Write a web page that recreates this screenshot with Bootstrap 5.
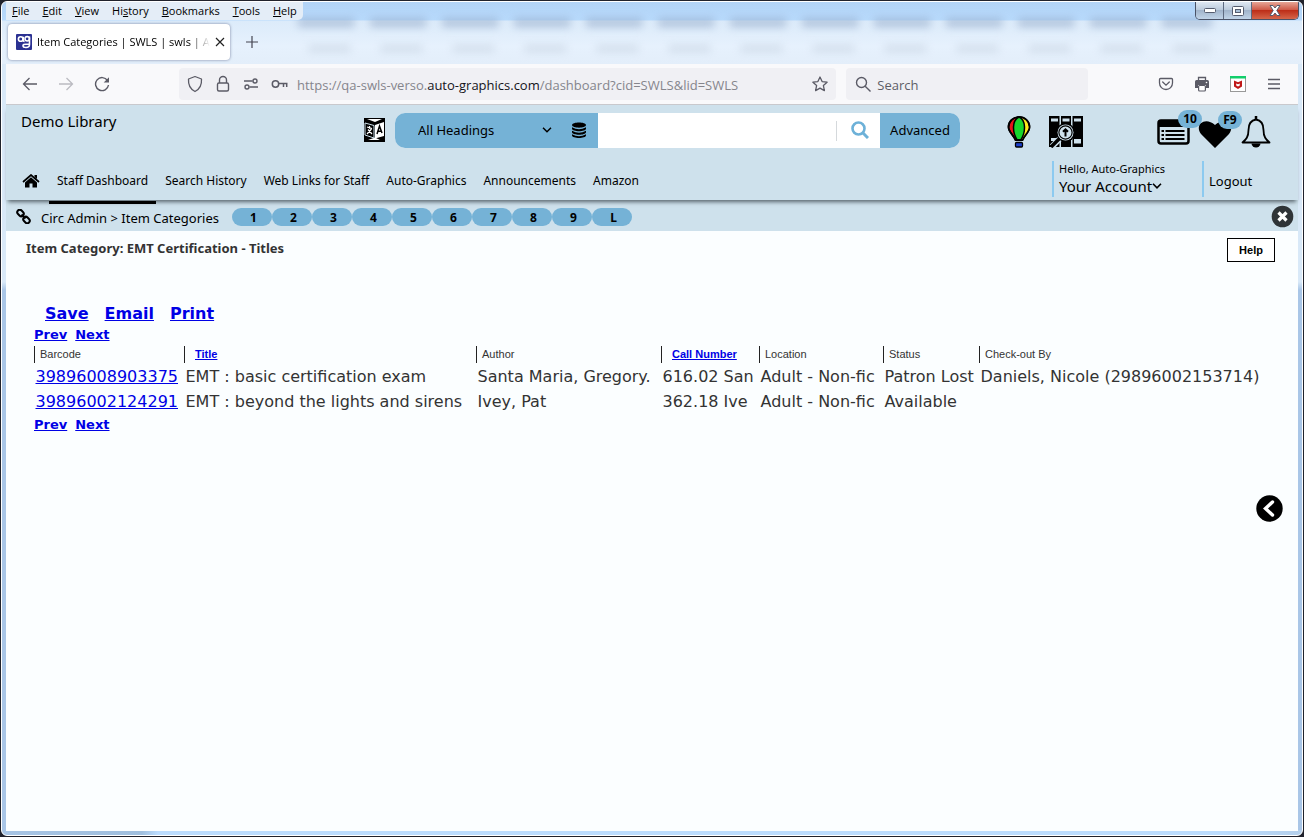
<!DOCTYPE html>
<html lang="en">
<head>
<meta charset="utf-8">
<meta name="viewport" content="width=device-width, initial-scale=1">
<title>Item Categories | SWLS | swls | Auto-Graphics</title>
<link rel="stylesheet" href="https://cdn.jsdelivr.net/npm/bootstrap@5.3.0/dist/css/bootstrap.min.css">
<style>
  :root { --pale:#cee1ec; --mid:#75b2d6; --line:#8ccaf0; --page:#fbfeff; --chrome:#f9f9fb; --field:#f0f0f4; --ink:#5b5b66; }
  body { font-family:"Noto Sans","Open Sans",sans-serif; font-size:13px; line-height:18px; color:#000; background:#20222c; }
  a { color:inherit; text-decoration:none; }
  svg { display:block; flex:none; }
  button { padding:0; border:0; background:none; color:inherit; }
  .desk-window { min-height:100vh; padding:1px; }
  .glass { border:1px solid #fff; border-radius:6px; padding:0 4px 4px; overflow:hidden;
    background:linear-gradient(90deg,#a7c4e4 0,#a0bfde 140px,#bbdcfe 156px,#bbdcfe 94%,#b4cfeb) bottom/100% 5px no-repeat,linear-gradient(#d9e9f8 0,#d9e9f8 280px,#a9c6e7 288px); }
  .titlebar { height:62px; margin:0 -4px; padding:0 4px; background:linear-gradient(#b2d3f6 0,#b8dafc 18px,#dcebfa 19px,#e6f1fd 44px,#e3eefa); font-family:"Open Sans",sans-serif; font-size:11px; }
  .smudge { left:296px; right:90px; filter:blur(4px); }
  .smudge-a { top:16px; height:9px; background:repeating-linear-gradient(90deg,#97adcb 0,#97adcb 56px,transparent 57px,transparent 72px); opacity:.65; }
  .smudge-b { top:43px; height:7px; background:repeating-linear-gradient(90deg,transparent 0,transparent 10px,#b9c6d5 11px,#b9c6d5 52px,transparent 53px,transparent 72px); opacity:.45; }
  .menus { background:#e4edf7; border-radius:0 0 5px 0; padding:0 6px; gap:13px; height:18px; align-items:center; }
  .menus button { line-height:16px; }
  .tab-box { width:222px; height:36px; margin-left:2px; border-radius:4px; background:#fff; box-shadow:0 0 3px #7780a0; padding:0 10px 0 8px; gap:5px; }
  .tab-box .tab-label { flex:1; white-space:nowrap; -webkit-mask-image:linear-gradient(90deg,#000 88%,transparent); }
  .win-buttons { top:0; right:3px; height:18px; border:1px solid #4a5266; border-top:0; border-radius:0 0 5px 5px; overflow:hidden; }
  .win-buttons button { display:grid; place-items:center; width:28px; background:linear-gradient(#dfe8f2,#bccbdc 45%,#9fb2c9 46%,#c1d4e8); border-right:1px solid #5e6a80; }
  .win-buttons .w-close { width:46px; border:0; background:linear-gradient(#e6a596,#cf5b49 45%,#bb2a15 46%,#d5664a); }
  .toolbar { height:41px; background:var(--chrome); border-bottom:1px solid #c9c9cd; color:var(--ink); font-family:"Open Sans",sans-serif; }
  .toolbar .nav-group { width:173px; padding-left:16px; gap:20px; }
  .url-box,.find-box { height:32px; background:var(--field); border-radius:4px; }
  .url-box { flex:642 1 0; padding:0 8px; gap:12px; }
  .find-box { flex:224 1 0; padding:0 9px; margin-left:10px; gap:5px; }
  .url-text { flex:1; font-size:13px; line-height:20px; padding-top:1px; margin-left:-3px; color:#85858c; white-space:nowrap; overflow:hidden; }
  .url-text b { font-weight:400; color:#15141a; }
  .find-box input { border:0; background:none; min-width:0; width:100%; padding:1px 0 0; }
  .find-box input::placeholder { color:#5d5d66; opacity:1; }
  .toolbar .tools { padding:0 16px 0 70px; gap:20px; }
  .app-head { background:var(--pale); height:95px; box-shadow:0 4px 4px -2px #59666e; z-index:2; padding:0 26px 0 15px; }
  .brand-name { width:343px; font-size:15px; line-height:18px; align-self:flex-start; }
  .search-set { flex:1; height:35px; margin-left:10px; border-radius:10px; overflow:hidden; background:#fff; }
  .search-set .scope { width:203px; background:var(--mid); padding:0 11px 0 23px; }
  .scope select { appearance:none; border:0; background:none; width:120px; padding:0; color:#000; }
  .search-set input { flex:1; min-width:0; border:0; outline:0; padding:0 8px; }
  .search-set .go { width:44px; display:grid; place-items:center; position:relative; }
  .search-set .go::before { content:""; position:absolute; left:0; top:8px; height:20px; border-left:1px solid #d5d9dc; }
  .search-set .adv { width:80px; background:var(--mid); }
  .head-top { padding-top:7px; }
  .tool-icons { margin-left:47px; }
  .shelf { margin-left:18px; margin-right:74px; }
  .count-tag { position:absolute; height:18px; top:-9px; border-radius:9px; background:var(--mid); font-size:12px; font-weight:700; line-height:18px; text-align:center; width:24px; right:-12px; }
  .heart .count-tag { top:-5px; right:-10px; }
  .head-low { padding-top:13px; }
  .main-links { padding-left:1px; gap:1px; font-size:12px; }
  .main-links a { padding:0 8px; line-height:18px; position:relative; }
  .main-links a.current::after { content:""; position:absolute; left:0; right:0; top:29px; height:3px; background:#000; }
  .acct { border-left:2px solid var(--line); height:36px; width:150px; padding-left:5px; }
  .acct small { display:block; font-size:11px; line-height:16px; }
  .acct button { font-size:15px; line-height:18px; display:flex; align-items:center; }
  .out { border-left:2px solid var(--line); height:36px; width:70px; padding-left:5px; line-height:40px; }
  .crumb-bar { background:var(--pale); height:31px; padding:2px 4px 0 10px; }
  .crumbs { margin:2px 13px 0 10px; }
  .pills a { width:40px; height:18px; border-radius:9px; background:var(--mid); font-weight:700; font-size:12px; line-height:20px; text-align:center; padding-left:3px; }
  .sheet { background:var(--page); min-height:calc(100vh - 237px); font-family:"DejaVu Sans",sans-serif; color:#333; padding:7px 16px 0 20px; position:relative; }
  .sheet a { color:#0000e5; text-decoration:underline; }
  .sheet h1 { font-family:"Noto Sans",sans-serif; font-size:13px; line-height:20px; font-weight:700; margin:0; }
  .help-btn { width:48px; height:24px; border:1px solid #000; background:#fff; color:#000; font:bold 11px "Liberation Sans",sans-serif; margin-right:7px; }
  .acts { font-size:16px; font-weight:700; line-height:24px; gap:16px; margin:40px 0 0 19px; }
  .pager { font-size:13px; font-weight:700; line-height:18px; gap:8px; margin-left:8px; }
  .items { margin:2px 0 2px 8px; width:calc(100% - 8px); table-layout:fixed; color:#333; }
  .items th { border-left:1px solid #222; height:17px; padding:0 0 0 5px; font:11px/17px "Liberation Sans",sans-serif; white-space:nowrap; }
  .items th.sorted { font-weight:700; padding-left:10px; }
  .items td { font-size:16px; line-height:25px; padding:0 0 0 1px; white-space:nowrap; }
  .items tr:first-child td { padding-top:1px; }
  .slide-btn { position:absolute; right:15px; top:264px; }
</style>
</head>
<body>
<div class="desk-window">
<div class="glass">
  <header class="titlebar position-relative">
    <div class="smudge smudge-a position-absolute" aria-hidden="true"></div>
    <div class="smudge smudge-b position-absolute" aria-hidden="true"></div>
    <div class="d-flex position-relative">
      <nav class="menus d-flex" aria-label="Menu">
        <button type="button"><u>F</u>ile</button><button type="button"><u>E</u>dit</button><button type="button"><u>V</u>iew</button><button type="button">Hi<u>s</u>tory</button><button type="button"><u>B</u>ookmarks</button><button type="button"><u>T</u>ools</button><button type="button"><u>H</u>elp</button>
      </nav>
    </div>
    <div class="d-flex align-items-center position-relative pt-1">
      <div class="tab-box d-flex align-items-center">
        <svg width="16" height="16" viewBox="0 0 16 16"><rect width="16" height="16" rx="1" fill="#2b3192"/><g fill="none" stroke="#fff" stroke-width="1.6"><circle cx="4.7" cy="5" r="2.3"/><path d="M7.2 2.8v3.6q0 1 1.4 1"/><circle cx="11.2" cy="4.8" r="2.2"/><path d="M13.5 2.5v8q0 3-3.5 3-3 0-3-1.7t3-1.6h3"/></g></svg>
        <span class="tab-label">Item Categories | SWLS | swls | A</span>
        <button type="button" aria-label="Close tab"><svg width="10" height="10" viewBox="0 0 10 10" stroke="#222" stroke-width="1.2"><path d="M1 1l8 8M9 1l-8 8"/></svg></button>
      </div>
      <button type="button" class="ms-3" aria-label="New tab"><svg width="12" height="12" viewBox="0 0 12 12" stroke="#444450" stroke-width="1.2"><path d="M6 0v12M0 6h12"/></svg></button>
    </div>
    <div class="win-buttons position-absolute d-flex">
      <button type="button" aria-label="Minimize"><svg width="12" height="5"><rect x=".5" y=".5" width="11" height="4" rx="1" fill="#fff" stroke="#555c6e"/></svg></button>
      <button type="button" aria-label="Restore"><svg width="12" height="10"><rect x=".5" y=".5" width="11" height="9" rx="1" fill="#fff" stroke="#555c6e"/><rect x="3.5" y="3.500" width="5" height="3" fill="#a9bfd6" stroke="#555c6e"/></svg></button>
      <button type="button" class="w-close" aria-label="Close"><svg width="12" height="11" viewBox="0 0 12 11"><path d="M1 .5h3l2 2.500 2-2.500h3L7.800 5.500 11 10.500H8L6 8l-2 2.500H1l3.200-5z" fill="#fff" stroke="#555c6e"/></svg></button>
    </div>
  </header>

  <div class="toolbar d-flex align-items-center">
    <div class="nav-group d-flex">
      <button type="button" aria-label="Back"><svg width="16" height="16" viewBox="0 0 16 16" fill="none" stroke="#5b5b66" stroke-width="1.3"><path d="M15 8H2M7.500 2L1.500 8l6 6"/></svg></button>
      <button type="button" aria-label="Forward"><svg width="16" height="16" viewBox="0 0 16 16" fill="none" stroke="#bbbbc1" stroke-width="1.3"><path d="M1 8h13M8.500 2l6 6-6 6"/></svg></button>
      <button type="button" aria-label="Reload"><svg width="16" height="16" viewBox="0 0 16 16" fill="none" stroke="#5b5b66" stroke-width="1.4"><path d="M13.500 4.500A6.500 6.500 0 1 0 14.500 9"/><path d="M15 1.200V6.500H9.700z" fill="#5b5b66" stroke="none"/></svg></button>
    </div>
    <div class="url-box d-flex align-items-center">
      <svg width="16" height="18" viewBox="0 0 16 18" fill="none" stroke="#5b5b66" stroke-width="1.3"><path d="M8 1.500L14.500 4c.4 6-1.500 10-6.500 12.500C3 14 1.100 10 1.500 4z" stroke-linejoin="round"/></svg>
      <svg width="16" height="18" viewBox="0 0 16 18" fill="none" stroke="#5b5b66" stroke-width="1.400"><rect x="2.500" y="8" width="11" height="8" rx="1.500"/><path d="M4.500 8V5a3.500 3.500 0 0 1 7 0v3"/></svg>
      <svg width="16" height="16" viewBox="0 0 16 16" fill="none" stroke="#5b5b66" stroke-width="1.400"><path d="M1 5h8.500M6.500 11H15"/><circle cx="12" cy="5" r="2"/><circle cx="4" cy="11" r="2"/></svg>
      <svg width="17" height="12" viewBox="0 0 17 12" fill="none" stroke="#5b5b66" stroke-width="1.500"><circle cx="4.500" cy="6" r="3.200"/><path d="M8 5.500h8.500M12.500 6v3M15.700 6v3"/></svg>
      <span class="url-text">https://qa-swls-verso.<b>auto-graphics.com</b>/dashboard?cid=SWLS&amp;lid=SWLS</span>
      <button type="button" aria-label="Bookmark"><svg width="16" height="16" viewBox="0 0 16 16" fill="none" stroke="#5b5b66" stroke-width="1.300" stroke-linejoin="round"><path d="M8 1l2.100 4.600 5 .6-3.700 3.400 1 5L8 12.100l-4.400 2.500 1-5L.9 6.200l5-.6z"/></svg></button>
    </div>
    <div class="find-box d-flex align-items-center">
      <svg width="17" height="17" viewBox="0 0 17 17" fill="none" stroke="#5b5b66" stroke-width="1.400"><circle cx="6.500" cy="6.500" r="5"/><path d="M10.200 10.200L15.500 15.500"/></svg>
      <input type="search" placeholder="Search" aria-label="Search the web">
    </div>
    <div class="tools d-flex align-items-center">
      <button type="button" aria-label="Pocket"><svg width="16" height="16" viewBox="0 0 16 16" fill="none" stroke="#5b5b66" stroke-width="1.300"><path d="M2.500 2.500h11q1 0 1 1V7a6.500 6.500 0 0 1-13 0V3.500q0-1 1-1z"/><path d="M4.700 6L8 9.200 11.300 6" stroke-linecap="round"/></svg></button>
      <button type="button" aria-label="Print page"><svg width="16" height="16" viewBox="0 0 16 16"><path d="M4.500 4V1.500h7V4" fill="none" stroke="#5b5b66" stroke-width="1.300"/><path d="M2.500 4h11A1.700 1.700 0 0 1 15 5.700V12h-3V9H4v3H1V5.700A1.700 1.700 0 0 1 2.500 4z" fill="#5b5b66"/><rect x="4.600" y="9.500" width="6.800" height="5.500" rx="1" fill="#fff" stroke="#5b5b66" stroke-width="1.200"/><circle cx="12.500" cy="6.500" r=".8" fill="#fff"/></svg></button>
      <button type="button" aria-label="Web protection"><svg width="16" height="16" viewBox="0 0 16 16"><rect x=".5" y=".5" width="15" height="15" fill="#fff" stroke="#999"/><rect width="16" height="2.500" fill="#12ce6b"/><path d="M4 4.500L8 6.200 12 4.500V10.500L8 13l-4-2.500zM6.200 7.400v2L8 10.500l1.800-1.100v-2L8 8.200z" fill="#c01818" fill-rule="evenodd"/></svg></button>
      <button type="button" aria-label="Application menu"><svg width="16" height="16" viewBox="0 0 16 16" stroke="#5b5b66" stroke-width="1.300"><path d="M2 3.500h12M2 8h12M2 12.500h12"/></svg></button>
    </div>
  </div>

  <div class="app-head position-relative">
    <div class="head-top d-flex align-items-center">
      <div class="brand-name">Demo Library</div>
      <button type="button" aria-label="Language"><svg width="21" height="24" viewBox="0 0 21 24"><rect width="21" height="24"/><path d="M3 1h15l-7 3z" fill="#fff"/><path d="M4 22h12l-5-2.500z" fill="#fff"/><path d="M1 5l9 2.500V20L1 17z" fill="#000" stroke="#cee1ec"/><path d="M11 7l9-3v14l-9 2.500z" fill="#fff"/><path d="M3 9l5 1.500M5.500 8v3M7.500 11L3 16M4 11.500L8 16" stroke="#fff" stroke-width="1.200" fill="none"/><path d="M13 16l2.500-8L18 15M14 13.200h3.200" stroke="#000" stroke-width="1.500" fill="none"/></svg></button>
      <form class="search-set d-flex">
        <div class="scope d-flex align-items-center">
          <select aria-label="Search scope"><option>All Headings</option></select>
          <svg class="ms-1" width="10" height="6" viewBox="0 0 10 6" fill="none" stroke="#000" stroke-width="1.500"><path d="M1 .8l4 4 4-4"/></svg>
          <svg class="ms-auto" width="16" height="16" viewBox="0 0 16 16"><path d="M1 3C1-.5 15-.5 15 3S1 6.500 1 3z"/><path d="M1 5.200q7 4 14 0v1.500C15 10 1 10 1 6.700zM1 8.800q7 4 14 0v1.500c0 3.300-14 3.300-14 0zM1 12.200q7 4 14 0v1.300c0 3.300-14 3.300-14 0z"/></svg>
        </div>
        <input type="text" aria-label="Search terms">
        <button type="button" class="go" aria-label="Search"><svg class="ms-1" width="18" height="18" viewBox="0 0 18 18" fill="none" stroke="#6db1d8" stroke-width="2.600"><circle cx="7.500" cy="7.500" r="6"/><path d="M12 12l5 5" stroke-width="3"/></svg></button>
        <button type="button" class="adv">Advanced</button>
      </form>
      <div class="tool-icons d-flex align-items-center pt-1">
        <a href="#" aria-label="Kids"><svg width="24" height="32" viewBox="0 0 24 32"><path d="M1.500 11a10.500 10 0 0 1 21 0c0 5-5 8-7 13h-7c-2-5-7-8-7-13z" fill="#e8141c" stroke="#000" stroke-width="1.800"/><path d="M12 1a10.500 10 0 0 1 10 10c0 5-5 8-6.500 13H12z" fill="#ffec1c"/><path d="M12 1c7 3 7 15 1.800 23h-3.600C5 16 5 4 12 1z" fill="#18d62c" stroke="#000" stroke-width="1.500"/><path d="M1.500 11a10.500 10 0 0 1 21 0c0 5-5 8-7 13h-7c-2-5-7-8-7-13z" fill="none" stroke="#000" stroke-width="1.600"/><rect x="8.500" y="26.500" width="7" height="4.500" rx="1" fill="#1b3fd0" stroke="#000" stroke-width="1.300"/></svg></a>
        <a href="#" class="shelf" aria-label="Shelf browse"><svg width="34" height="32" viewBox="0 0 34 32"><path d="M0 0h10.500v31H0zM12 0h10v31H12zM23.500 0H34v31H23.500z"/><path d="M2 2.500h7v3H2zM13.500 2.500h7v3h-7zM25 2.500h7v3h-7zM25 23h7v4.500h-7zM2 22h6v3H2z" fill="#cee1ec"/><path d="M11 22.500L3 30.500" stroke="#cee1ec" stroke-width="6"/><circle cx="16.500" cy="16.500" r="9.500" fill="#000"/><circle cx="16.500" cy="16.500" r="8" fill="#cee1ec"/><circle cx="16.500" cy="16.500" r="6.600" stroke="#000" stroke-width="1.200" fill="#cee1ec"/><path d="M10.500 22.500L2 31" stroke="#000" stroke-width="3.500"/><path d="M16.500 20.500v-7M14 15.800l2.500-2.500 2.500 2.500" stroke="#000" stroke-width="2" fill="none"/></svg></a>
        <a href="#" class="position-relative" aria-label="Lists, 10"><svg width="33" height="26" viewBox="0 0 33 26"><rect x="1.500" y="1.500" width="30" height="23" rx="2.500" fill="none" stroke="#000" stroke-width="2.500"/><path d="M1 2h31v6H1z"/><path d="M8.500 12h19M8.500 16h19M8.500 20h19" stroke="#000" stroke-width="2"/><path d="M4.500 12h2.500M4.500 16h2.500M4.500 20h2.500" stroke="#000" stroke-width="2"/></svg><span class="count-tag">10</span></a>
        <a href="#" class="heart position-relative ms-2" aria-label="Favorites, F9"><svg class="mt-1" width="34" height="28" viewBox="0 0 34 28"><path d="M17 28L3 14C-4 5 7-4 17 5 27-4 38 5 31 14z"/></svg><span class="count-tag">F9</span></a>
        <a href="#" class="ms-2" aria-label="Alerts"><svg width="32" height="32" viewBox="0 0 32 32"><path d="M16 3.500C9.500 4.500 8.500 9 8.500 14c0 7-2.500 9.500-6 12.500h27c-3.500-3-6-5.500-6-12.500 0-5-1-9.500-7.500-10.500z" fill="none" stroke="#000" stroke-width="1.800" stroke-linejoin="round"/><path d="M16 0v4" stroke="#000" stroke-width="2.500"/><path d="M11.500 27.500h9a4.500 4 0 0 1-9 0z"/></svg></a>
      </div>
    </div>
    <div class="head-low d-flex align-items-center justify-content-between">
      <nav class="main-links d-flex align-items-center pt-1" aria-label="Main">
        <a href="#" class="ps-0 pe-1 me-1" aria-label="Home"><svg width="18" height="14" viewBox="0 0 18 14"><path d="M9 3.200L15 8.500V13.500h-4.500V9.500h-3v4H3V8.500z"/><path d="M1 8l8-7 8 7" fill="none" stroke="#000" stroke-width="1.700"/><path d="M12.500 1H15v4l-2.500-2z"/></svg></a>
        <a href="#" class="current">Staff Dashboard</a><a href="#">Search History</a><a href="#">Web Links for Staff</a><a href="#">Auto-Graphics</a><a href="#">Announcements</a><a href="#">Amazon</a>
      </nav>
      <div class="d-flex">
        <div class="acct"><small>Hello, Auto-Graphics</small><button type="button">Your Account<svg width="10" height="6" viewBox="0 0 10 6" fill="none" stroke="#000" stroke-width="1.600"><path d="M1 .8l4 4 4-4"/></svg></button></div>
        <div class="out"><a href="#">Logout</a></div>
      </div>
    </div>
  </div>

  <div class="crumb-bar d-flex align-items-center">
    <svg width="15" height="15" viewBox="0 0 15 15" fill="none" stroke="#000" stroke-width="2"><rect x="1" y="1.500" width="7" height="5" rx="2.500" transform="rotate(45 4.500 4)"/><rect x="7" y="8.500" width="7" height="5" rx="2.500" transform="rotate(45 10.500 11)"/><path d="M5.500 5.500l4 4"/></svg>
    <nav class="crumbs" aria-label="Breadcrumb"><a href="#">Circ Admin</a> &gt; <a href="#">Item Categories</a></nav>
    <nav class="pills d-flex" aria-label="Panels"><a href="#">1</a><a href="#">2</a><a href="#">3</a><a href="#">4</a><a href="#">5</a><a href="#">6</a><a href="#">7</a><a href="#">8</a><a href="#">9</a><a href="#">L</a></nav>
    <button type="button" class="ms-auto" aria-label="Close panel"><svg width="23" height="23" viewBox="0 0 23 23"><circle cx="11.500" cy="11.500" r="10.800" fill="#2f3437"/><path d="M7.500 7.500l8 8M15.500 7.500l-8 8" stroke="#fff" stroke-width="3.200"/></svg></button>
  </div>

  <main class="sheet">
    <div class="d-flex justify-content-between">
      <h1>Item Category: EMT Certification - Titles</h1>
      <button type="button" class="help-btn">Help</button>
    </div>
    <div class="acts d-flex"><a href="#">Save</a><a href="#">Email</a><a href="#">Print</a></div>
    <div class="pager d-flex"><a href="#">Prev</a><a href="#">Next</a></div>
    <table class="items">
      <colgroup><col style="width:150px"><col style="width:292px"><col style="width:185px"><col style="width:98px"><col style="width:124px"><col style="width:96px"><col></colgroup>
      <thead><tr><th>Barcode</th><th class="sorted"><a href="#">Title</a></th><th>Author</th><th class="sorted"><a href="#">Call Number</a></th><th>Location</th><th>Status</th><th>Check-out By</th></tr></thead>
      <tbody>
        <tr><td><a href="#">39896008903375</a></td><td>EMT : basic certification exam</td><td>Santa Maria, Gregory.</td><td>616.02 San</td><td>Adult - Non-fic</td><td>Patron Lost</td><td>Daniels, Nicole (29896002153714)</td></tr>
        <tr><td><a href="#">39896002124291</a></td><td>EMT : beyond the lights and sirens</td><td>Ivey, Pat</td><td>362.18 Ive</td><td>Adult - Non-fic</td><td>Available</td><td></td></tr>
      </tbody>
    </table>
    <div class="pager d-flex"><a href="#">Prev</a><a href="#">Next</a></div>
    <button type="button" class="slide-btn" aria-label="Open side panel"><svg width="27" height="27" viewBox="0 0 27 27"><circle cx="13.500" cy="13.500" r="13.200"/><path d="M16.500 7l-7 6.500 7 6.500" fill="none" stroke="#fff" stroke-width="3.400" stroke-linecap="round"/></svg></button>
  </main>
</div>
</div>
<script src="https://cdn.jsdelivr.net/npm/bootstrap@5.3.0/dist/js/bootstrap.bundle.min.js"></script>
</body>
</html>
